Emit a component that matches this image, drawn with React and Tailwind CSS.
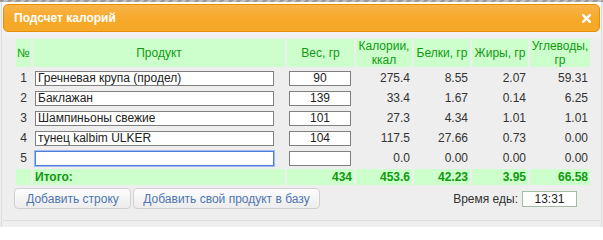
import { useState } from "react"

const rows = [
  { n: 1, name: "Гречневая крупа (продел)", w: "90", kcal: "275.4", p: "8.55", f: "2.07", c: "59.31" },
  { n: 2, name: "Баклажан", w: "139", kcal: "33.4", p: "1.67", f: "0.14", c: "6.25" },
  { n: 3, name: "Шампиньоны свежие", w: "101", kcal: "27.3", p: "4.34", f: "1.01", c: "1.01" },
  { n: 4, name: "тунец kalbim ÜLKER", w: "104", kcal: "117.5", p: "27.66", f: "0.73", c: "0.00" },
  { n: 5, name: "", w: "", kcal: "0.0", p: "0.00", f: "0.00", c: "0.00", focus: true },
]

const head = "bg-[#ccffcc] text-[#119911] flex items-center justify-center text-center leading-[14px]"
const num = "flex items-center justify-end pr-[2px] text-[#333]"
const tot = "bg-[#ccffcc] flex items-center justify-end pr-[2px] font-bold text-[#119911]"

export default function App() {
  const [time, setTime] = useState("13:31")

  return (
    <div className="w-[603px] h-[227px] overflow-hidden bg-[#eee] font-['Liberation_Sans',Arial,sans-serif] text-[12px]">
      {/* page stripes above the dialog */}
      <div className="h-[2px] bg-[repeating-linear-gradient(135deg,#9a9a9a_0_3px,#bdbdbd_3px_6px)]" />

      <div className="ml-px w-[601px] h-[225px] border-x border-[#ddd] bg-[linear-gradient(#fff,#eee_40px)] px-px pt-[2px]">
        {/* Title bar */}
        <div className="h-[28px] flex items-center justify-between rounded-[5px] border border-[#e78f08] bg-[linear-gradient(#f8b347,#f6a828_60%)] pl-[10px] pr-[8px]">
          <span className="font-bold text-white text-[12px]">Подсчет калорий</span>
          <svg width="9" height="9" viewBox="0 0 9 9">
            <path d="M1.2 1.2 L7.8 7.8 M7.8 1.2 L1.2 7.8" stroke="#fff" strokeWidth="2.4" strokeLinecap="square" />
          </svg>
        </div>

        <div className="pl-[13px] pt-[7px]">
          <div className="grid grid-cols-[15px_252px_67px_56px_56px_56px_60px] grid-rows-[28px_repeat(5,18px)_16px] gap-x-[2px] gap-y-[2px] w-[574px]">
            {/* header */}
            <div className={head}>№</div>
            <div className={head}>Продукт</div>
            <div className={head}>Вес, гр</div>
            <div className={head}>Калории,<br />ккал</div>
            <div className={head}>Белки, гр</div>
            <div className={head}>Жиры, гр</div>
            <div className={head}>Углеводы,<br />гр</div>

            {rows.map((r) => (
              <div key={r.n} className="contents">
                <div className="flex items-center justify-center text-[#333]">{r.n}</div>
                <div className="flex items-center pl-[2px]">
                  <input
                    defaultValue={r.name}
                    className={
                      "w-[239px] h-[15px] px-[2px] py-0 leading-[13px] bg-white text-[12px] text-[#222] outline-none " +
                      (r.focus ? "border border-[#4d7fd6] ring-1 ring-[#9cbbef]" : "border border-[#7f7f7f]")
                    }
                  />
                </div>
                <div className="flex items-center pl-[2px]">
                  <input
                    defaultValue={r.w}
                    className="w-[62px] h-[15px] py-0 leading-[13px] text-center bg-white text-[12px] text-[#222] border border-[#7f7f7f] outline-none"
                  />
                </div>
                <div className={num}>{r.kcal}</div>
                <div className={num}>{r.p}</div>
                <div className={num}>{r.f}</div>
                <div className={num}>{r.c}</div>
              </div>
            ))}

            {/* totals */}
            <div className="bg-[#ccffcc]" />
            <div className="bg-[#ccffcc] flex items-center pl-[2px] font-bold text-[#119911]">Итого:</div>
            <div className={tot}>434</div>
            <div className={tot}>453.6</div>
            <div className={tot}>42.23</div>
            <div className={tot}>3.95</div>
            <div className={tot}>66.58</div>
          </div>

          {/* buttons */}
          <div className="-ml-[2px] mt-[3px] w-[576px] flex items-center">
            <button className="h-[21px] w-[117px] rounded-[4px] border border-[#d0d0d0] bg-[linear-gradient(#fdfdfd,#ececec)] text-[#4f76b0] text-[12px]">
              Добавить строку
            </button>
            <button className="ml-[2px] h-[21px] w-[187px] rounded-[4px] border border-[#d0d0d0] bg-[linear-gradient(#fdfdfd,#ececec)] text-[#4f76b0] text-[12px]">
              Добавить свой продукт в базу
            </button>
            <div className="ml-auto mr-[13px] flex items-center">
              <span className="text-[#333]">Время еды:</span>
              <input
                value={time}
                onChange={(e) => setTime(e.target.value)}
                className="ml-[4px] w-[55px] h-[16px] text-center bg-white text-[12px] text-[#222] border border-[#a3bca3] outline-none"
              />
            </div>
          </div>

          <div className="-ml-[13px] mt-[11px] border-t border-[#dcdcdc]" />
        </div>
      </div>
    </div>
  )
}
